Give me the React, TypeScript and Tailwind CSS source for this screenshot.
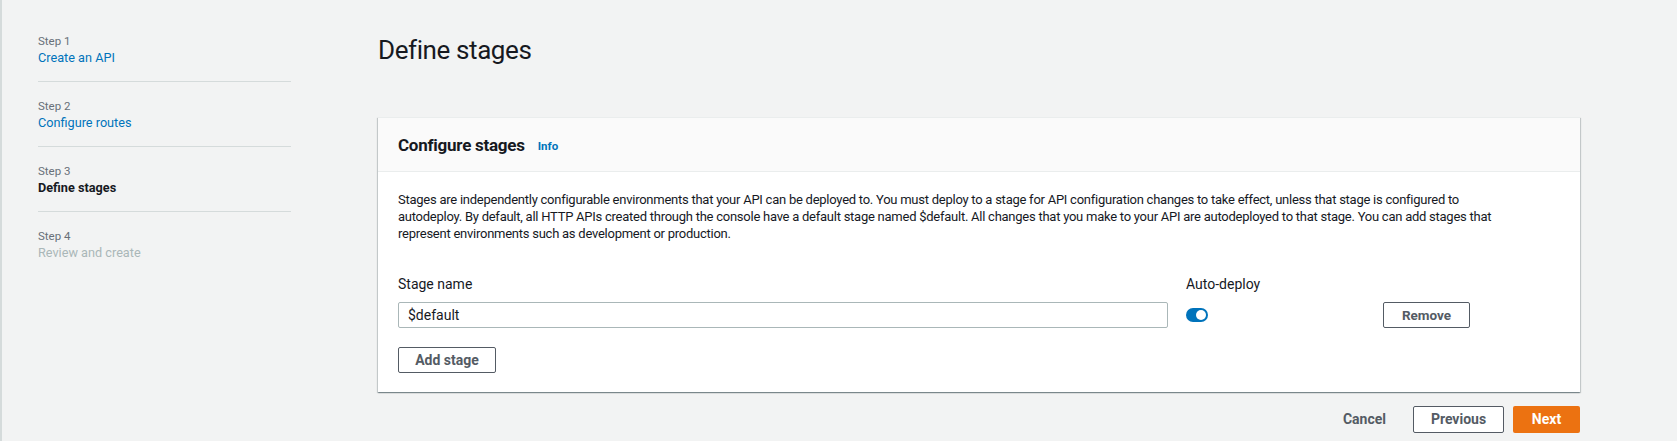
const font = { fontFamily: "Roboto, 'Liberation Sans', Arial, sans-serif" };

const steps = [
  { label: "Step 1", title: "Create an API", state: "link" },
  { label: "Step 2", title: "Configure routes", state: "link" },
  { label: "Step 3", title: "Define stages", state: "current" },
  { label: "Step 4", title: "Review and create", state: "disabled" },
];

function StepNav() {
  return (
    <nav className="w-[289px] shrink-0 pl-[36px] pt-[17px]">
      {steps.map((s, i) => (
        <div
          key={s.label}
          className={
            "pt-[16px] pb-[14px] " +
            (i < steps.length - 1 ? "border-b border-[#d5dbdb]" : "")
          }
        >
          <div className="text-[11.5px] leading-[16px] text-[#687078]">{s.label}</div>
          <div
            className={
              "text-[12.7px] leading-[18px] " +
              (s.state === "link"
                ? "text-[#0073bb]"
                : s.state === "current"
                ? "font-bold text-[#16191f]"
                : "text-[#aab7b8]")
            }
          >
            {s.title}
          </div>
        </div>
      ))}
    </nav>
  );
}

function Toggle() {
  return (
    <div className="w-[22px] h-[14px] rounded-full bg-[#0073bb] flex items-center justify-end px-[2px]">
      <div className="w-[10px] h-[10px] rounded-full bg-white" />
    </div>
  );
}

export default function App() {
  return (
    <div className="h-[441px] bg-[#f2f3f3] border-l-2 border-[#d5dbdb] flex text-[#16191f]" style={font}>
      <StepNav />
      <main className="ml-[87px] w-[1202px] pt-[33px]">
        <h1 className="text-[26px] leading-[34px] font-normal tracking-[-0.4px]">Define stages</h1>

        <section className="mt-[50px] bg-white shadow-[0_1px_1px_0_rgba(0,28,36,0.3),1px_1px_1px_0_rgba(0,28,36,0.15),-1px_1px_1px_0_rgba(0,28,36,0.15)] border-t border-[#eaeded]">
          <header className="h-[54px] bg-[#fafafa] border-b border-[#eaeded] flex items-center px-[20px]">
            <h2 className="text-[17px] font-bold leading-[22px] tracking-[-0.25px]">Configure stages</h2>
            <span className="ml-[13px] text-[11.5px] font-bold text-[#0073bb] leading-[22px] pt-[2px]">Info</span>
          </header>

          <div className="px-[20px] pt-[19px] pb-[19px]">
            <p className="text-[13px] leading-[17px] tracking-[-0.25px] max-w-[1110px]">
              Stages are independently configurable environments that your API can be deployed to. You must deploy to a stage for API configuration changes to take effect, unless that stage is configured to autodeploy. By default, all HTTP APIs created through the console have a default stage named $default. All changes that you make to your API are autodeployed to that stage. You can add stages that represent environments such as development or production.
            </p>

            <div className="mt-[33px] flex">
              <div className="w-[770px]">
                <label className="block text-[14px] leading-[18px]">Stage name</label>
                <div className="mt-[9px] h-[26px] border border-[#aab7b8] rounded-[2px] flex items-center px-[9px] text-[14px]">
                  $default
                </div>
              </div>
              <div className="ml-[18px] w-[197px]">
                <div className="text-[14px] leading-[18px]">Auto-deploy</div>
                <div className="mt-[9px] h-[26px] flex items-center">
                  <Toggle />
                </div>
              </div>
              <div className="pt-[27px]">
                <button className="w-[87px] h-[26px] border border-[#545b64] rounded-[2px] text-[13.5px] font-bold text-[#545b64] bg-white">
                  Remove
                </button>
              </div>
            </div>

            <button className="mt-[19px] w-[98px] h-[26px] border border-[#545b64] rounded-[2px] text-[14px] font-bold text-[#545b64] bg-white">
              Add stage
            </button>
          </div>
        </section>

        <div className="mt-[14px] flex items-center justify-end">
          <button className="text-[14px] font-bold text-[#545b64]">Cancel</button>
          <button className="ml-[27px] w-[91px] h-[27px] border border-[#545b64] rounded-[2px] bg-white text-[14px] font-bold text-[#545b64]">
            Previous
          </button>
          <button className="ml-[9px] w-[67px] h-[27px] rounded-[2px] bg-[#ec7211] text-[14px] font-bold text-white">
            Next
          </button>
        </div>
      </main>
    </div>
  );
}
